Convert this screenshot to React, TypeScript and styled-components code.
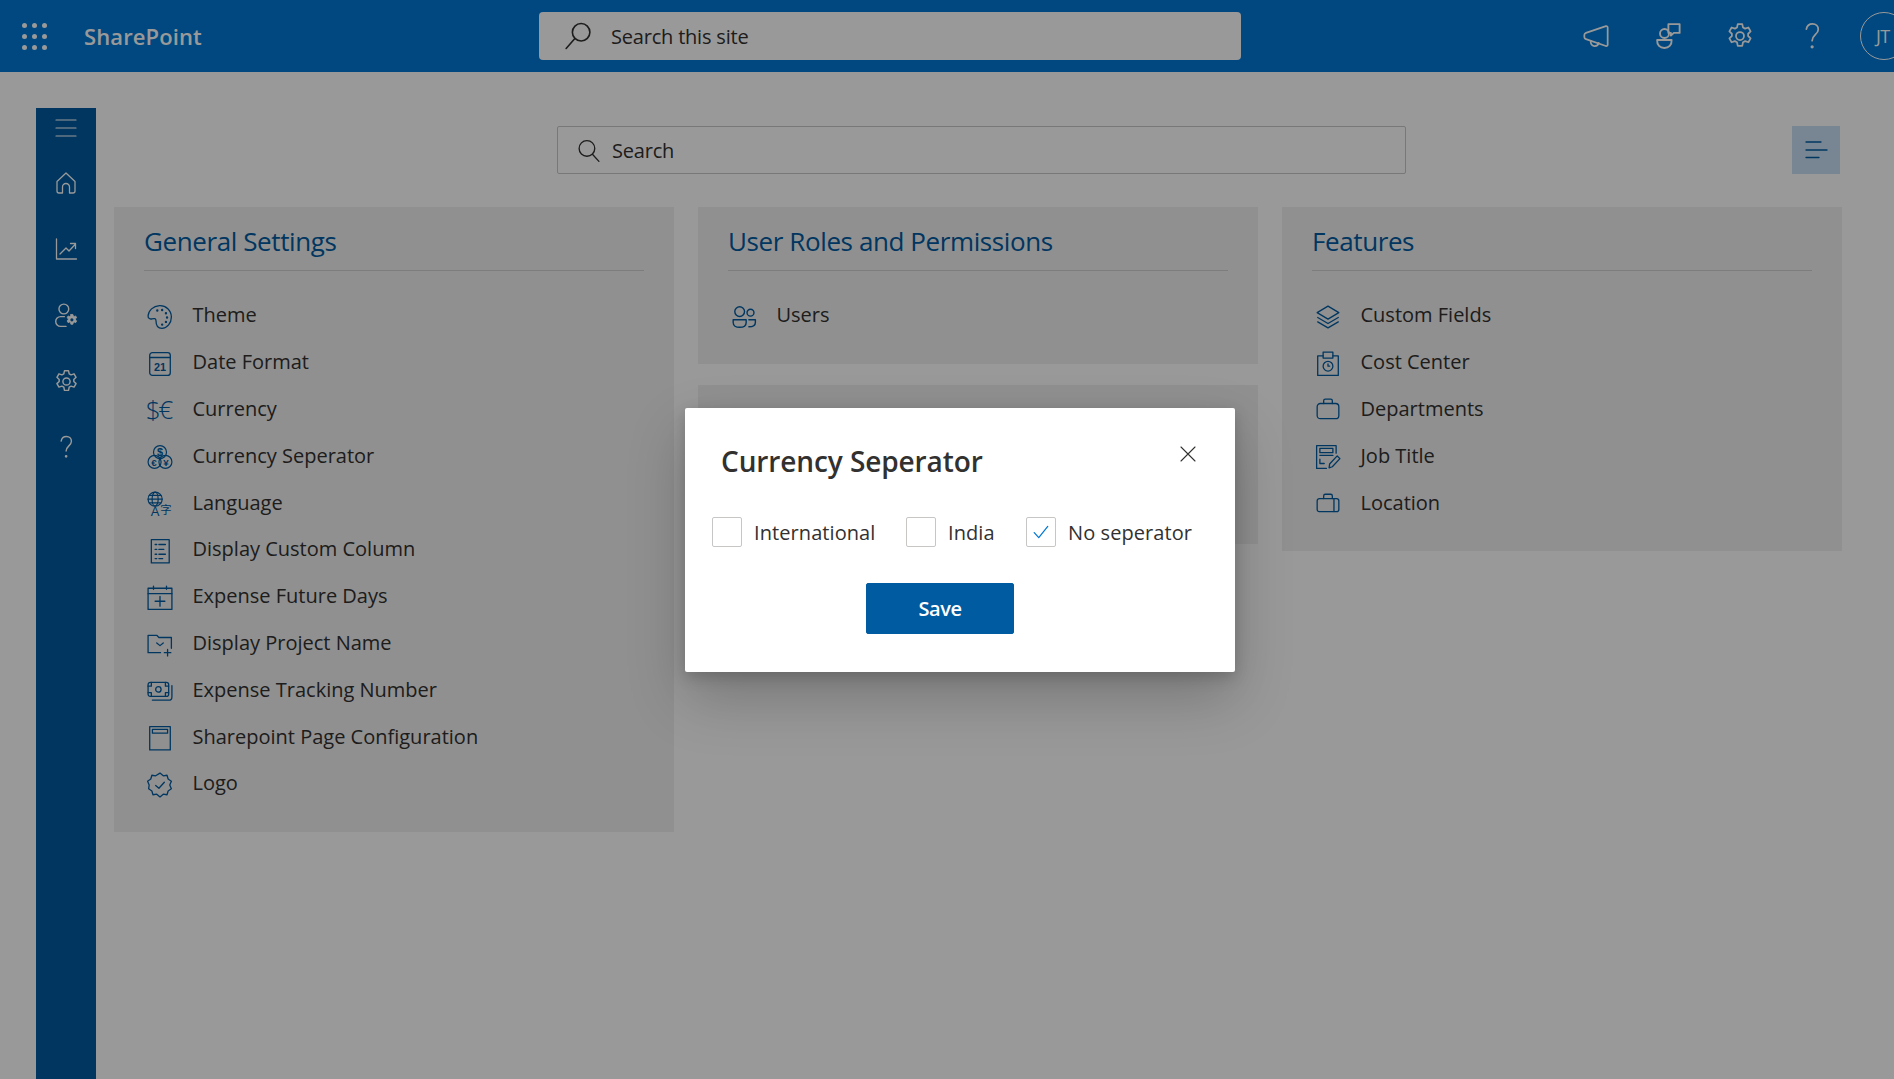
import React from "react";
import styled, { createGlobalStyle } from "styled-components";

const FONT = `"Open Sans", "Noto Sans", "Liberation Sans", sans-serif`;

const Global = createGlobalStyle`
  html, body { margin: 0; padding: 0; overflow: hidden; background: #fff; }
  body { font-family: ${FONT}; }
  * { box-sizing: border-box; }
`;

const Frame = styled.div`
  position: relative;
  width: 1920px;
  height: 1079px;
  overflow: hidden;
  background: #fff;
`;
const TopBar = styled.header`
  display: grid;
  grid-template-columns: 84px 455px 702px 1fr auto;
  align-items: center;
  height: 72px;
  padding-right: 12px;
  background: #0078d4;
  color: #fff;
`;
const Waffle = styled.div`
  display: grid;
  grid-template-columns: repeat(3, 4px);
  gap: 6px;
  margin-left: 22px;
  width: 24px;
`;
const Dot = styled.span`
  width: 5px;
  height: 5px;
  border-radius: 50%;
  background: #fff;
`;
const Brand = styled.div`
  font-size: 22px;
  font-weight: 600;
  letter-spacing: 0.1px;
  color: #fff;
`;
const SiteSearch = styled.div`
  display: flex;
  align-items: center;
  gap: 18px;
  height: 48px;
  padding-left: 24px;
  border-radius: 4px;
  background: #fff;
  color: #323130;
  font-size: 20px;
  letter-spacing: -0.2px;
`;
const TopActions = styled.div`
  grid-column: 5;
  display: flex;
  align-items: center;
`;
const TopAction = styled.div`
  display: flex;
  align-items: center;
  justify-content: center;
  width: 72px;
  height: 72px;
  color: #fff;
`;
const Avatar = styled.div`
  display: flex;
  align-items: center;
  justify-content: flex-start;
  flex: none;
  width: 48px;
  height: 48px;
  margin-left: 12px;
  padding-left: 15px;
  border: 1px solid #fff;
  border-radius: 50%;
  font-size: 18px;
  letter-spacing: -0.5px;
`;
const Body = styled.div`
  display: flex;
  align-items: stretch;
  height: 1007px;
  padding-top: 36px;
  padding-left: 36px;
`;
const Rail = styled.nav`
  display: flex;
  flex-direction: column;
  align-items: center;
  width: 60px;
  background: #005ba1;
  color: #fff;
`;
const RailToggle = styled.div`
  display: flex;
  align-items: center;
  justify-content: center;
  height: 40px;
  margin-bottom: 2px;
`;
const RailItem = styled.div`
  display: flex;
  align-items: center;
  justify-content: center;
  height: 66px;
`;
const Main = styled.main`
  width: 1728px;
  margin-left: 18px;
  padding-top: 18px;
`;
const SearchRow = styled.div`
  display: flex;
  align-items: center;
  height: 48px;
  margin-bottom: 33px;
  padding-left: 443px;
`;
const PageSearch = styled.div`
  display: flex;
  align-items: center;
  gap: 11px;
  width: 849px;
  height: 48px;
  padding-left: 18px;
  border: 1px solid #c8c8c8;
  border-radius: 2px;
  color: #323130;
  font-size: 20px;
  letter-spacing: -0.2px;
`;
const FilterToggle = styled.div`
  display: flex;
  align-items: center;
  justify-content: center;
  width: 48px;
  height: 48px;
  margin-left: 386px;
  background: #c7e0f4;
  color: #005ba1;
`;
const Columns = styled.div`
  display: grid;
  grid-template-columns: repeat(3, 560px);
  gap: 24px;
  align-items: start;
`;
const Stack = styled.div`
  display: flex;
  flex-direction: column;
  gap: 21px;
`;
const Card = styled.section<{ $blank?: boolean }>`
  background: #f0f0f0;
  padding: 0 30px 26px;
  min-height: ${(p) => (p.$blank ? "159px" : "0")};
`;
const CardTitle = styled.h2`
  display: flex;
  align-items: center;
  height: 64px;
  margin: 0 0 20px;
  padding: 5px 0 0;
  border-bottom: 1px solid #d0d0d0;
  color: #005ba1;
  font-size: 26px;
  font-weight: 400;
  letter-spacing: -0.4px;
`;
const Row = styled.div`
  display: flex;
  align-items: center;
  height: 46.8px;
  padding-left: 3px;
  gap: 19.5px;
  color: #323130;
  font-size: 20px;
`;
const RowLabel = styled.span`
  position: relative;
  top: 0.5px;
`;
const RowIcon = styled.span`
  position: relative;
  top: 2.5px;
  display: flex;
  align-items: center;
  justify-content: center;
  flex: none;
  width: 26px;
  height: 26px;
  color: #005ba1;
`;
const Scrim = styled.div`
  position: absolute;
  inset: 0;
  display: flex;
  align-items: center;
  justify-content: center;
  background: rgba(0, 0, 0, 0.4);
`;
const Dialog = styled.div`
  position: relative;
  display: flex;
  flex-direction: column;
  width: 550px;
  height: 264px;
  padding: 0 27px;
  border-radius: 2px;
  background: #fff;
  color: #323130;
  box-shadow: 0 25.6px 57.6px rgba(0, 0, 0, 0.22), 0 4.8px 14.4px rgba(0, 0, 0, 0.18);
`;
const DialogTitle = styled.h3`
  margin: 34px 0 0 9px;
  height: 38px;
  font-size: 28px;
  line-height: 38px;
  font-weight: 600;
  letter-spacing: -0.1px;
`;
const Close = styled.div`
  position: absolute;
  top: 38px;
  right: 39px;
  display: flex;
  color: #323130;
`;
const Choices = styled.div`
  display: flex;
  align-items: center;
  margin-top: 37px;
`;
const Choice = styled.label<{ $width: number }>`
  display: flex;
  align-items: center;
  gap: 12px;
  flex: none;
  width: ${(p) => p.$width}px;
  font-size: 20px;
  letter-spacing: 0.08px;
`;
const ChoiceText = styled.span`
  position: relative;
  top: 1px;
`;
const Box = styled.span`
  display: flex;
  align-items: center;
  justify-content: center;
  flex: none;
  width: 30px;
  height: 30px;
  border: 1px solid #c8c6c4;
  border-radius: 2px;
  color: #0078d4;
`;
const SaveButton = styled.button`
  align-self: flex-start;
  width: 148px;
  height: 51px;
  margin: 36px 0 0 154px;
  border: 1px solid #005ba1;
  border-radius: 2px;
  background: #005ba1;
  color: #fff;
  font-family: ${FONT};
  font-size: 20px;
  font-weight: 600;
  letter-spacing: -0.4px;
`;
const Svg = styled.svg<{ $s?: number; $w?: number }>`
  display: block;
  flex: none;
  width: ${(p) => p.$s ?? 26}px;
  height: ${(p) => p.$s ?? 26}px;
  fill: none;
  stroke: currentColor;
  stroke-width: ${(p) => p.$w ?? 1.2};
  stroke-linecap: round;
  stroke-linejoin: round;
`;
const IconText = styled.text<{ $size: number; $weight?: number; $light?: boolean }>`
  fill: currentColor;
  stroke: none;
  font-family: ${(p) => (p.$light ? `"Open Sans", sans-serif` : `"Liberation Sans", "Noto Sans CJK SC", sans-serif`)};
  font-size: ${(p) => p.$size}px;
  font-weight: ${(p) => p.$weight ?? 400};
  text-anchor: middle;
`;

const Ico = ({ s, w, children }: { s?: number; w?: number; children: React.ReactNode }) => (
  <Svg viewBox="0 0 24 24" $s={s} $w={w}>{children}</Svg>
);

const gearPath =
  "M10.2 2.5h3.6l.6 2.7 1.7.9 2.6-.9 1.8 3.1-2 1.9v1.8l2 1.9-1.8 3.1-2.6-.9-1.7.9-.6 2.9h-3.6l-.6-2.9-1.7-.9-2.6.9-1.8-3.1 2-1.9v-1.8l-2-1.9 1.8-3.1 2.6.9 1.7-.9z";
const Gear = ({ s = 26, w = 1.4 }: { s?: number; w?: number }) => (
  <Ico s={s} w={w}><path d={gearPath} /><circle cx="12" cy="12" r="3.2" /></Ico>
);
const Question = ({ s = 26, w = 1.4 }: { s?: number; w?: number }) => (
  <Ico s={s} w={w}><path d="M7.5 6.5C8 3.8 10 2.3 12.4 2.3c2.7 0 4.6 1.9 4.6 4.4 0 4.1-4.9 4.5-4.9 9" /><circle cx="12.1" cy="20.6" r=".6" /></Ico>
);
const Megaphone = () => (
  <Ico s={28} w={1.5}>
    <path d="M2 11.2c0-.9.5-1.6 1.4-1.9L20.5 3.6c.8-.2 1.5.3 1.5 1.2v14.6c0 .9-.7 1.4-1.5 1.2L3.4 14.7C2.5 14.4 2 13.7 2 12.8z" />
    <path d="M7.5 16.2c-.3 2.5 1 4.2 3 4.4 2 .2 3.4-.9 3.8-2.8" />
  </Ico>
);
const ChatPerson = () => (
  <Ico s={30} w={1.5}>
    <circle cx="9.2" cy="10" r="3.6" />
    <path d="M3.3 15.2h11.6c.2 4-2.3 6.4-5.8 6.4s-6-2.4-5.8-6.4z" />
    <path d="M12.3 2.5h9v7h-4.6l-2.4 2.2V9.5h-2z" />
  </Ico>
);
const SearchGlass = ({ flip, s = 26 }: { flip?: boolean; s?: number }) => (
  <Ico s={s} w={1.3}>
    {flip ? (
      <><circle cx="14.5" cy="9" r="7" /><path d="M9.5 14 2.5 22" /></>
    ) : (
      <><circle cx="10.5" cy="10" r="7.5" /><path d="m16 15.8 6 6.6" /></>
    )}
  </Ico>
);

const Palette = () => (
  <Ico><path d="M11.5 1.5C5.8 1.8 1.2 6 1 11c-.1 2.4 2 3.2 3.7 2.7 2-.6 3.6-.3 3.6 1.7 0 3.4 1.400 7.1 5.500 7.1 4.800 0 8.700-4.900 8.700-10.500C22.500 6 17.500 1.200 11.500 1.500z" /><circle cx="9.500" cy="6" r=".5" /><circle cx="14" cy="5.500" r=".5" /><circle cx="17.500" cy="8.500" r=".5" /><circle cx="18.500" cy="12.500" r=".5" /><circle cx="17.500" cy="16.500" r=".5" /><circle cx="14" cy="19" r=".5" /></Ico>
);
const DateIcon = () => (
  <Ico><rect x="2.500" y="1.500" width="19" height="21" rx="2.500" /><path d="M2.500 6h19" /><IconText x="12" y="18.500" $size={10} $weight={700}>21</IconText></Ico>
);
const CurrencyIcon = () => (
  <Ico s={30}><IconText x="6.500" y="19" $size={21} $weight={300} $light>$</IconText><IconText x="16.500" y="19" $size={21} $weight={300} $light>€</IconText></Ico>
);
const CoinsIcon = () => (
  <Ico w={1.1}>
    <circle cx="12" cy="7.500" r="6" /><circle cx="7" cy="16.500" r="6" /><circle cx="17" cy="16.500" r="6" />
    <IconText x="12" y="11" $size={10} $weight={700}>$</IconText>
    <IconText x="6.500" y="20" $size={9} $weight={700}>€</IconText>
    <IconText x="17.500" y="20" $size={9} $weight={700}>¥</IconText>
  </Ico>
);
const LanguageIcon = () => (
  <Ico w={1.1}>
    <circle cx="7.500" cy="7.500" r="6.500" /><ellipse cx="7.500" cy="7.500" rx="2.800" ry="6.500" /><path d="M1 7.500h13M2 4h11M2 11h11" />
    <IconText x="7.500" y="23" $size={12}>A</IconText>
    <IconText x="17.500" y="21.500" $size={10.500}>字</IconText>
  </Ico>
);
const ListDoc = () => (
  <Ico><rect x="4" y="1.500" width="16.500" height="21.500" /><path d="M7.500 6h1.500M11 6h6M7.500 10.500h1.500M11 10.500h4.500M7.500 15h1.500M11 15h6M7.500 19h1.500M11 19h3.500" /></Ico>
);
const CalendarPlus = () => (
  <Ico><rect x="1" y="3" width="22" height="19.500" /><path d="M1 8h22M6 1v3M18 1v3M12 10.500v9M7.500 15h9" /></Ico>
);
const FolderCheck = () => (
  <Ico><path d="M12.500 20H1V4h8l2 2h11.500v10" /><path d="m9 11 3 2.500 3-2.500M19 17v6M16 20h6" /></Ico>
);
const MoneyIcon = () => (
  <Ico><rect x="1" y="4" width="19" height="13" rx="2" /><circle cx="10.500" cy="10.500" r="2.500" /><path d="M1 7.500h3V4M20 7.500h-3V4M1 13.500h3V17M20 13.500h-3V17M23 7v10.500a3 3 0 0 1-3 3H5" /></Ico>
);
const PageIcon = () => (
  <Ico><rect x="2.500" y="1.500" width="19" height="21.500" /><rect x="5" y="4" width="14" height="3.500" /></Ico>
);
const BadgeCheck = () => (
  <Ico><path d="m12 1 3 2.500 3.500-.5 1 3.500 3 2-1.500 3.500 1.500 3.500-3 2-1 3.500-3.500-.5-3 2.500-3-2.500-3.500.5-1-3.500-3-2L2 12 .5 8.500l3-2 1-3.500 3.500.5z" /><path d="m8 12.500 3 2.500 5-5.500" /></Ico>
);
const UsersIcon = () => (
  <Ico w={1.3}><circle cx="8" cy="7" r="4.500" /><circle cx="18" cy="8" r="3.200" /><path d="M2 14.500h12v2.500c0 3-2.500 4.500-6 4.500s-6-1.500-6-4.500zM16.500 21c3.500 0 6-1.200 6-4v-2.500h-6" /></Ico>
);
const LayersIcon = () => (
  <Ico><path d="M12 2 2 8l10 6 10-6z" /><path d="m2.500 12.500 9.500 5.500 9.500-5.500M2.500 16.500l9.500 5.500 9.500-5.500" /></Ico>
);
const CostIcon = () => (
  <Ico><path d="M7.500 4.500H2.500v18h19v-18h-5" /><rect x="7.500" y="1" width="9" height="5.500" /><circle cx="12" cy="14" r="4.500" /><path d="M12 12v2h1.500" /></Ico>
);
const BriefcaseIcon = () => (
  <Ico><rect x="2" y="6" width="20" height="14" rx="3" /><path d="M8 6V3.500C8 2.500 8.800 2 9.500 2h5c.700 0 1.500.500 1.500 1.500V6" /></Ico>
);
const JobIcon = () => (
  <Ico><path d="M19.500 8.500V1.500H1.500v21h9" /><rect x="4.500" y="4" width="12" height="4" /><path d="M4.500 10.500h12M4.500 14v4h4" /><path d="m13 22 .5-3.500 7-7.500 2.500 2.500-7 7.500z" /></Ico>
);
const CaseIcon = () => (
  <Ico><rect x="2" y="7" width="20" height="12" rx="2" /><path d="M8 7V4.500c0-1 .700-1.500 1.500-1.500h5c.800 0 1.500.500 1.500 1.500V7M17.500 7v12" /></Ico>
);
const RailHome = () => (
  <Ico s={24} w={1.3}><path d="M3 10.500 12 2l9 8.500v9.500a2 2 0 0 1-2 2h-3.500v-6a3.500 3.500 0 0 0-7 0v6H5a2 2 0 0 1-2-2z" /></Ico>
);
const RailChart = () => (
  <Ico s={24} w={1.3}><path d="M2.500 2v20h20M6 17l6-6 3 3 6.500-7M16.500 6.500h5v5" /></Ico>
);
const RailUserGear = () => (
  <Ico s={26} w={1.3}>
    <circle cx="10" cy="6.500" r="4.500" />
    <path d="M10.500 13.500H7a4.500 4.500 0 0 0 0 9h5" />
    <g transform="translate(11.200 10.200) scale(.52)">
      <path d={gearPath} fill="currentColor" strokeWidth="1.500" />
      <circle cx="12" cy="12" r="2.800" fill="#005ba1" stroke="none" />
    </g>
  </Ico>
);

const general: [string, React.ReactNode][] = [
  ["Theme", <Palette />],
  ["Date Format", <DateIcon />],
  ["Currency", <CurrencyIcon />],
  ["Currency Seperator", <CoinsIcon />],
  ["Language", <LanguageIcon />],
  ["Display Custom Column", <ListDoc />],
  ["Expense Future Days", <CalendarPlus />],
  ["Display Project Name", <FolderCheck />],
  ["Expense Tracking Number", <MoneyIcon />],
  ["Sharepoint Page Configuration", <PageIcon />],
  ["Logo", <BadgeCheck />],
];
const features: [string, React.ReactNode][] = [
  ["Custom Fields", <LayersIcon />],
  ["Cost Center", <CostIcon />],
  ["Departments", <BriefcaseIcon />],
  ["Job Title", <JobIcon />],
  ["Location", <CaseIcon />],
];

const SettingsCard = ({ title, items }: { title: string; items: [string, React.ReactNode][] }) => (
  <Card>
    <CardTitle>{title}</CardTitle>
    {items.map(([label, icon]) => (
      <Row key={label}>
        <RowIcon>{icon}</RowIcon>
        <RowLabel>{label}</RowLabel>
      </Row>
    ))}
  </Card>
);

export default function App() {
  return (
    <Frame>
      <Global />
      <TopBar>
        <Waffle>{Array.from({ length: 9 }, (_, i) => <Dot key={i} />)}</Waffle>
        <Brand>SharePoint</Brand>
        <SiteSearch><SearchGlass flip s={30} />Search this site</SiteSearch>
        <TopActions>
          <TopAction><Megaphone /></TopAction>
          <TopAction><ChatPerson /></TopAction>
          <TopAction><Gear s={30} /></TopAction>
          <TopAction><Question s={30} /></TopAction>
          <Avatar>JT</Avatar>
        </TopActions>
      </TopBar>
      <Body>
        <Rail>
          <RailToggle>
            <Ico s={24} w={1.2}><path d="M2 4h20M2 12h20M2 20h20" /></Ico>
          </RailToggle>
          <RailItem><RailHome /></RailItem>
          <RailItem><RailChart /></RailItem>
          <RailItem><RailUserGear /></RailItem>
          <RailItem><Gear s={27} w={1.3} /></RailItem>
          <RailItem><Question s={26} w={1.3} /></RailItem>
        </Rail>
        <Main>
          <SearchRow>
            <PageSearch><SearchGlass s={25} />Search</PageSearch>
            <FilterToggle>
              <Ico s={24} w={1.3}><path d="M2 4h15M2 12h21M2 19.500h13" /></Ico>
            </FilterToggle>
          </SearchRow>
          <Columns>
            <SettingsCard title="General Settings" items={general} />
            <Stack>
              <SettingsCard title="User Roles and Permissions" items={[["Users", <UsersIcon />]]} />
              <Card $blank />
            </Stack>
            <SettingsCard title="Features" items={features} />
          </Columns>
        </Main>
      </Body>
      <Scrim>
        <Dialog>
          <DialogTitle>Currency Seperator</DialogTitle>
          <Close>
            <Svg viewBox="0 0 16 16" $s={16} $w={1.1}><path d="m1 1 14 14M15 1 1 15" /></Svg>
          </Close>
          <Choices>
            <Choice $width={194}><Box /><ChoiceText>International</ChoiceText></Choice>
            <Choice $width={120}><Box /><ChoiceText>India</ChoiceText></Choice>
            <Choice $width={180}>
              <Box><Svg viewBox="0 0 16 16" $s={18} $w={1.1}><path d="m2 8.500 4 4.500 8-10" /></Svg></Box>
              <ChoiceText>No seperator</ChoiceText>
            </Choice>
          </Choices>
          <SaveButton>Save</SaveButton>
        </Dialog>
      </Scrim>
    </Frame>
  );
}
